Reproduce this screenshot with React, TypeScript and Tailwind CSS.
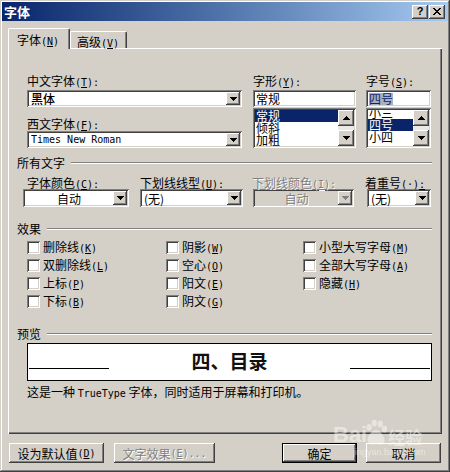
import type { ReactNode } from "react";

// classic 3D edges
const raised =
  "shadow-[inset_-1px_-1px_0_#404040,inset_1px_1px_0_#ffffff,inset_-2px_-2px_0_#808080]";
const sunken =
  "shadow-[inset_1px_1px_0_#808080,inset_-1px_-1px_0_#ffffff,inset_2px_2px_0_#404040,inset_-2px_-2px_0_#d4d0c8]";
const latin = "font-['DejaVu_Sans_Mono',monospace] text-[10px]";
const grayText = "text-[#808080] [text-shadow:1px_1px_0_#ffffff]";

function Key({ k, tail = "" }: { k: string; tail?: string }) {
  return (
    <span className={latin}>
      (<span className="underline">{k}</span>){tail}
    </span>
  );
}

function Tri({ up = false, gray = false }: { up?: boolean; gray?: boolean }) {
  return (
    <svg width="7" height="4" viewBox="0 0 7 4" shapeRendering="crispEdges">
      <path
        d={
          up
            ? "M3 0h1v1H3z M2 1h3v1H2z M1 2h5v1H1z M0 3h7v1H0z"
            : "M0 0h7v1H0z M1 1h5v1H1z M2 2h3v1H2z M3 3h1v1H3z"
        }
        fill={gray ? "#808080" : "#000000"}
      />
    </svg>
  );
}

function Label({ children, className = "" }: { children: ReactNode; className?: string }) {
  return <div className={`h-[13px] leading-[13px] whitespace-nowrap ${className}`}>{children}</div>;
}

function DropBtn({ gray = false }: { gray?: boolean }) {
  return (
    <div className={`w-[14px] self-stretch flex items-center justify-center bg-[#d4d0c8] ${raised}`}>
      <Tri gray={gray} />
    </div>
  );
}

function Combo({
  size,
  children,
  center = false,
  disabled = false,
}: {
  size: string;
  children: ReactNode;
  center?: boolean;
  disabled?: boolean;
}) {
  return (
    <div className={`flex p-[2px] ${sunken} ${disabled ? "bg-[#d4d0c8]" : "bg-white"} ${size}`}>
      <div
        className={`flex-1 flex items-center whitespace-nowrap leading-[13px] ${
          center ? "justify-center" : "pl-[2px]"
        } ${disabled ? grayText : ""}`}
      >
        {children}
      </div>
      <DropBtn gray={disabled} />
    </div>
  );
}

function ScrollBar() {
  return (
    <div className="w-[16px] flex flex-col">
      <div className={`h-[16px] flex items-center justify-center bg-[#d4d0c8] ${raised}`}>
        <Tri up />
      </div>
      <div className="flex-1 bg-[#ebe9e5]" />
      <div className={`h-[16px] flex items-center justify-center bg-[#d4d0c8] ${raised}`}>
        <Tri />
      </div>
    </div>
  );
}

function ListBox({ items, sel, shift }: { items: string[]; sel: number; shift: string }) {
  return (
    <div className={`flex p-[2px] bg-white h-[40px] mt-[1px] ${sunken}`}>
      <div className="flex-1 overflow-hidden">
        <div className={shift}>
          {items.map((it, i) => (
            <div
              key={it}
              className={`h-[12px] leading-[12px] pl-[1px] whitespace-nowrap ${
                i === sel ? "bg-[#0a246a] text-white" : ""
              }`}
            >
              {it}
            </div>
          ))}
        </div>
      </div>
      <ScrollBar />
    </div>
  );
}

function GroupHead({ title, className = "" }: { title: string; className?: string }) {
  return (
    <div className={`flex items-center h-[13px] ml-[9px] mr-[10px] ${className}`}>
      <span className="leading-[13px]">{title}</span>
      <div className="flex-1 ml-[6px] border-t border-t-[#808080] border-b border-b-white" />
    </div>
  );
}

function Check({ label, k }: { label: string; k: string }) {
  return (
    <div className="flex items-center h-[18px] whitespace-nowrap">
      <div className={`w-[13px] h-[13px] bg-white ${sunken}`} />
      <span className="ml-[3px] leading-[13px]">
        {label}
        <Key k={k} />
      </span>
    </div>
  );
}

function Btn({
  children,
  className = "",
  disabled = false,
  primary = false,
}: {
  children: ReactNode;
  className?: string;
  disabled?: boolean;
  primary?: boolean;
}) {
  return (
    <div
      className={`h-[20px] flex items-center justify-center bg-[#d4d0c8] whitespace-nowrap leading-[13px] ${raised} ${
        primary ? "border border-black" : ""
      } ${disabled ? grayText : ""} ${className}`}
    >
      {children}
    </div>
  );
}

function TitleBar() {
  return (
    <div className="h-[19px] flex items-center bg-linear-to-r from-[#0a246a] to-[#a6caf0] pl-[2px] pr-[3px]">
      <span className="text-white font-bold text-[13px] leading-[13px]">字体</span>
      <div className="ml-auto flex gap-[1px]">
        <div className={`w-[16px] h-[14px] flex items-center justify-center bg-[#d4d0c8] ${raised}`}>
          <span className="font-['Liberation_Sans',sans-serif] font-bold text-[11px] leading-none">?</span>
        </div>
        <div className={`w-[16px] h-[14px] flex items-center justify-center bg-[#d4d0c8] ${raised}`}>
          <svg width="8" height="7" viewBox="0 0 8 7" shapeRendering="crispEdges">
            <path
              d="M0 0h2v1H0z M6 0h2v1H6z M1 1h2v1H1z M5 1h2v1H5z M2 2h4v1H2z M3 3h2v1H3z M2 4h4v1H2z M1 5h2v1H1z M5 5h2v1H5z M0 6h2v1H0z M6 6h2v1H6z"
              fill="#000"
            />
          </svg>
        </div>
      </div>
    </div>
  );
}

function Tabs() {
  return (
    <div className="flex items-end h-[20px] mt-[7px] relative z-10">
      <div className="w-[62px] h-[21px] -mb-[1px] bg-[#d4d0c8] border-t border-l border-white border-r border-r-[#404040] rounded-t-[2px] shadow-[inset_-1px_0_0_#808080] pl-[8px] pt-[4px] leading-[13px] whitespace-nowrap">
        字体<Key k="N" />
      </div>
      <div className="w-[57px] h-[17px] bg-[#d4d0c8] border-t border-l border-white border-r border-r-[#404040] rounded-t-[2px] shadow-[inset_-1px_0_0_#808080] pl-[6px] pt-[3px] leading-[13px] whitespace-nowrap">
        高级<Key k="V" />
      </div>
    </div>
  );
}

function Panel() {
  return (
    <div className="h-[386px] bg-[#d4d0c8] shadow-[inset_1px_1px_0_#ffffff,inset_-1px_-1px_0_#404040,inset_-2px_-2px_0_#808080] flex flex-col">
      {/* font names, style and size */}
      <div className="flex mt-[26px] ml-[19px]">
        <div className="w-[215px]">
          <Label>
            中文字体<Key k="T" tail=":" />
          </Label>
          <Combo size="h-[17px] mt-[3px]">
            <span className="font-medium">黑体</span>
          </Combo>
          <Label className="mt-[10px]">
            西文字体<Key k="F" tail=":" />
          </Label>
          <Combo size="h-[17px] mt-[1px]">
            <span className={latin}>Times New Roman</span>
          </Combo>
        </div>
        <div className="w-[103px] ml-[11px]">
          <Label>
            字形<Key k="Y" tail=":" />
          </Label>
          <div className={`h-[17px] mt-[3px] bg-white flex items-center px-[3px] ${sunken}`}>常规</div>
          <ListBox items={["常规", "倾斜", "加粗"]} sel={0} shift="" />
        </div>
        <div className="w-[65px] ml-[10px]">
          <Label>
            字号<Key k="S" tail=":" />
          </Label>
          <div className={`h-[17px] mt-[3px] bg-white flex items-center px-[3px] ${sunken}`}>
            <span className="bg-[#aab0c0] text-[#0a246a] leading-[12px]">四号</span>
          </div>
          <ListBox items={["小三", "四号", "小四"]} sel={1} shift="-mt-[3px]" />
        </div>
      </div>

      {/* all text */}
      <GroupHead title="所有文字" className="mt-[8px]" />
      <div className="flex mt-[7px] ml-[15px]">
        <div className="w-[106px]">
          <Label className="ml-[4px]">
            字体颜色<Key k="C" tail=":" />
          </Label>
          <Combo size="h-[18px]" center>
            自动
          </Combo>
        </div>
        <div className="w-[103px] ml-[11px]">
          <Label>
            下划线线型<Key k="U" tail=":" />
          </Label>
          <Combo size="h-[18px]">(无)</Combo>
        </div>
        <div className="w-[101px] ml-[10px]">
          <Label className={`-ml-[1px] ${grayText}`}>
            下划线颜色<Key k="I" tail=":" />
          </Label>
          <Combo size="h-[18px]" center disabled>
            自动
          </Combo>
        </div>
        <div className="w-[64px] ml-[13px]">
          <Label className="-ml-[2px]">
            着重号<span className={latin}>
              (·)<span className="underline">:</span>
            </span>
          </Label>
          <Combo size="h-[18px]">(无)</Combo>
        </div>
      </div>

      {/* effects */}
      <GroupHead title="效果" className="mt-[15px]" />
      <div className="flex mt-[3px] ml-[19px]">
        <div className="w-[139px]">
          <Check label="删除线" k="K" />
          <Check label="双删除线" k="L" />
          <Check label="上标" k="P" />
          <Check label="下标" k="B" />
        </div>
        <div className="w-[137px]">
          <Check label="阴影" k="W" />
          <Check label="空心" k="O" />
          <Check label="阳文" k="E" />
          <Check label="阴文" k="G" />
        </div>
        <div>
          <Check label="小型大写字母" k="M" />
          <Check label="全部大写字母" k="A" />
          <Check label="隐藏" k="H" />
        </div>
      </div>

      {/* preview */}
      <GroupHead title="预览" className="mt-[17px]" />
      <div className="ml-[19px] mt-[3px] w-[405px] h-[38px] bg-white border border-black flex items-start px-px">
        <div className="w-[80px] h-px bg-black mt-[24px]" />
        <div className="flex-1 text-center font-bold text-[19px] leading-[19px] mt-[7px] text-[#111]">
          四、目录
        </div>
        <div className="w-[80px] h-px bg-black mt-[24px]" />
      </div>
      <div className="ml-[19px] mt-[4px] h-[13px] leading-[13px] whitespace-nowrap">
        这是一种 <span className={latin}>TrueType</span> 字体，同时适用于屏幕和打印机。
      </div>
    </div>
  );
}

function Buttons() {
  return (
    <div className="flex mt-[9px] px-[1px]">
      <Btn className="w-[95px]">
        设为默认值<Key k="D" />
      </Btn>
      <Btn className="w-[101px] ml-[10px]" disabled>
        文字效果<Key k="E" tail="..." />
      </Btn>
      <div className="flex-1" />
      <Btn className="w-[75px]" primary>
        确定
      </Btn>
      <Btn className="w-[75px] ml-[9px]">取消</Btn>
    </div>
  );
}

// site watermark stamped on the screenshot
function Watermark() {
  return (
    <div className="absolute left-[333px] top-[419px] flex flex-col items-start opacity-45 pointer-events-none text-white">
      <div className="flex items-end">
        <span className="font-['Liberation_Sans',sans-serif] font-bold text-[22px] leading-[22px]">Bai</span>
        <svg width="24" height="27" viewBox="0 0 28 30" className="-ml-[3px]">
          <ellipse cx="6" cy="9" rx="3" ry="4" fill="#fff" />
          <ellipse cx="12" cy="4" rx="3" ry="4" fill="#fff" />
          <ellipse cx="19" cy="5" rx="3" ry="4" fill="#fff" />
          <ellipse cx="24" cy="11" rx="3" ry="4" fill="#fff" />
          <path d="M14 12c-5 0-10 8-10 12s3 5 6 5 3-1 4-1 2 1 5 1 5-1 5-5-5-12-10-12z" fill="#fff" />
        </svg>
        <span className="text-[17px] leading-[18px] font-bold">经验</span>
      </div>
      <span className="font-['Liberation_Sans',sans-serif] text-[9px] leading-[10px] mt-[1px] ml-[20px]">
        jingyan.baidu.com
      </span>
    </div>
  );
}

export default function App() {
  return (
    <div className="relative w-[450px] h-[472px] overflow-hidden bg-[#d4d0c8] p-[2px] text-black text-[12px] leading-[13px] font-['Noto_Sans_CJK_SC',sans-serif] shadow-[inset_-1px_-1px_0_#404040,inset_1px_1px_0_#d4d0c8,inset_-2px_-2px_0_#808080,inset_2px_2px_0_#ffffff]">
      <TitleBar />
      <div className="px-[6px]">
        <Tabs />
        <Panel />
        <Buttons />
      </div>
      <Watermark />
    </div>
  );
}
